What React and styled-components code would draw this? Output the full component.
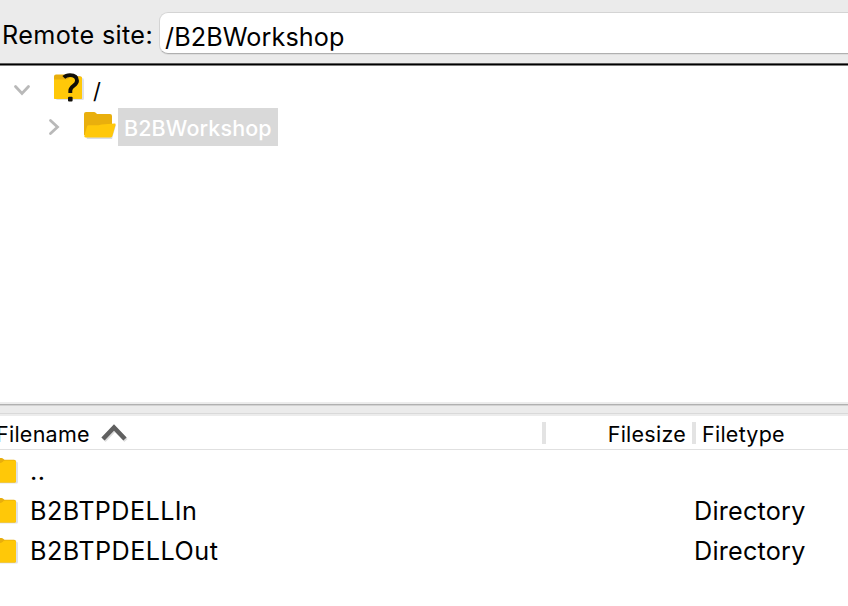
import React from "react";
import styled, { createGlobalStyle } from "styled-components";

const GlobalStyle = createGlobalStyle`
  * { box-sizing: border-box; }
  body { margin: 0; background: #fff; overflow: hidden; }
`;

const Window = styled.main`
  width: 848px;
  height: 606px;
  display: flex;
  flex-direction: column;
  overflow: hidden;
  background: #fff;
  color: #000;
  font-family: Inter, "Liberation Sans", sans-serif;
`;

const Text = styled.span`
  display: block;
  white-space: pre;
  font-size: ${(p) => p.$size || 25.2}px;
  line-height: 30px;
  letter-spacing: ${(p) => p.$track || 0}px;
`;

const SiteBar = styled.header`
  height: 63px;
  flex: none;
  display: flex;
  background: #ebebeb;
  padding: 12px 0 0 2px;
`;

const SiteLabel = styled.label`
  width: 157px;
  padding-top: 8px;
`;

const PathField = styled.div`
  flex: 1;
  height: 42px;
  padding: 9px 0 0 5px;
  background: #fff;
  border: 1px solid #d4d4d4;
  border-right: 0;
  border-bottom: 1px solid #b0b0b0;
  border-radius: 9px 0 0 9px;
  box-shadow: 0 1px 0 #dedede;
`;

const Divider = styled.div`
  height: 3px;
  flex: none;
  background: #000;
  border-top: 1px solid #5c5c5c;
  border-bottom: 1px solid #7c7c7c;
`;

const Tree = styled.section`
  height: 336px;
  flex: none;
  padding-top: 4px;
`;

const TreeRow = styled.div`
  height: 38px;
  display: flex;
  align-items: flex-start;
  padding-left: ${(p) => p.$indent}px;
`;

const RootName = styled.div`
  padding: 6px 0 0 7px;
`;

const SelectedName = styled.div`
  width: 160px;
  height: 38px;
  margin-left: 2px;
  padding: 5px 0 0 6px;
  background: #d9d9d9;
  color: #fff;
  font-weight: 500;
`;

const Icon = styled.svg`
  display: block;
  flex: none;
  overflow: visible;
`;

const Splitter = styled.div`
  height: 14px;
  flex: none;
  background: linear-gradient(
    #ececec 0 2px, #b0b0b0 2px 3px, #d2d2d2 3px 4px,
    #ebebeb 4px 11px, #d9d9d9 11px 12px, #ececec 12px
  );
`;

const ColumnHeader = styled.div`
  height: 34px;
  flex: none;
  display: grid;
  grid-template-columns: 542px 150px 1fr;
  border-bottom: 1px solid #e0e0e0;
`;

const HeadCell = styled.div`
  display: flex;
  position: relative;
  padding-top: 3px;
  justify-content: ${(p) => (p.$end ? "flex-end" : "flex-start")};
  padding-right: ${(p) => (p.$end ? 6 : 0)}px;
  padding-left: ${(p) => p.$left || 0}px;
`;

const Grip = styled.i`
  position: absolute;
  left: 0;
  top: 6px;
  width: 4px;
  height: 22px;
  background: #e3e3e3;
`;

const Filename = styled.div`
  width: 103px;
  margin-left: -4px;
`;

const FileRow = styled.div`
  height: 40px;
  display: grid;
  grid-template-columns: 30px 664px 1fr;
`;

const Cell = styled.div`
  padding-top: 6px;
`;

const Folder = () => (
  <>
    <path d="M1 2.500Q1 .5 3 .5h10l3 2H27q2 0 2 2V23q0 1.500-1.500 1.500H2.500Q1 24.500 1 23Z" fill="#b8bfca" opacity=".45" transform="translate(1 1)" />
    <path d="M0 2Q0 0 2 0h11.500q1 0 2 1l1 .7H26q2 0 2 2v19.300q0 1.500-1.500 1.500h-25Q0 24.500 0 23Z" fill="#e8ae0c" />
    <path d="M0 5h12q1.300 0 2.200-.8l1.400-1.200q.6-.5 1.600-.5H26.500q1.500 0 1.500 1.500V23q0 1.500-1.500 1.500h-25Q0 24.500 0 23Z" fill="#ffc808" />
  </>
);

const QuestionFolder = () => (
  <Icon width="32" height="32" viewBox="0 0 32 32">
    <g transform="translate(0 4.500)"><Folder /></g>
    <path d="M9.800 7.400Q12 5.100 16 5.100c4.400 0 7 2.100 7 5.600 0 4.900-6.700 5.300-6.700 10.100v2.200" fill="none" stroke="#100e08" strokeWidth="3.900" />
    <rect x="14" y="26.800" width="4.600" height="4.800" rx="1" fill="#100e08" />
  </Icon>
);

const OpenFolder = () => (
  <Icon width="32" height="27" viewBox="0 0 32 27">
    <path d="M2 24.500 5 13h27l-4 14H3Z" fill="#a9b4c8" opacity=".45" />
    <path d="M0 2Q0 0 2 0h8q1 0 2 1l1 1h13q2 0 2 2v19H0Z" fill="#e9af0d" />
    <path d="M3 14.500q.2-1.300 1.600-1.300h10l3-.8 13-.9q1.300 0 1 1.200L28.400 24q-.3 1.400-1.800 1.400H1.500Q0 25.400.3 24Z" fill="#ffc80a" />
  </Icon>
);

const Chevron = ({ d, w, h, color = "#b9b9b9", stroke = 2.8, shadow }) => (
  <Icon width={w} height={h} viewBox={`0 0 ${w} ${h}`} fill="none" strokeWidth={stroke}>
    {shadow && <path d={d} stroke="#dedede" transform="translate(1 1.500)" />}
    <path d={d} stroke={color} strokeLinecap={shadow ? "butt" : "round"} />
  </Icon>
);

const Slot = styled.div`
  width: ${(p) => p.$w}px;
  flex: none;
  padding-top: ${(p) => p.$top || 0}px;
  margin-left: ${(p) => p.$shift || 0}px;
`;

const FILES = [
  { name: "..", type: "", track: 0.5 },
  { name: "B2BTPDELLIn", type: "Directory", track: 0.42 },
  { name: "B2BTPDELLOut", type: "Directory", track: 0.47 },
];

export default function App() {
  return (
    <>
      <GlobalStyle />
      <Window>
        <SiteBar>
          <SiteLabel><Text $track={0.35}>Remote site:</Text></SiteLabel>
          <PathField><Text $track={0.08}>/B2BWorkshop</Text></PathField>
        </SiteBar>
        <Divider />
        <Tree>
          <TreeRow $indent={14}>
            <Slot $w={40} $top={15}><Chevron w={16} h={10} d="M1.500 1.500 8 8.500l6.500-7" /></Slot>
            <Slot $w={32} $top={0}><QuestionFolder /></Slot>
            <RootName><Text $size={22}>/</Text></RootName>
          </TreeRow>
          <TreeRow $indent={49}>
            <Slot $w={35} $top={11}><Chevron w={10} h={16} d="m1.500 1.500 7 6.500-7 6.500" /></Slot>
            <Slot $w={32} $top={4}><OpenFolder /></Slot>
            <SelectedName><Text $size={21.5} $track={0.12}>B2BWorkshop</Text></SelectedName>
          </TreeRow>
        </Tree>
        <Splitter />
        <ColumnHeader>
          <HeadCell>
            <Filename><Text $size={21.5} $track={0.25}>Filename</Text></Filename>
            <Slot $w={28} $top={4} $shift={2}>
              <Chevron w={26} h={18} d="m2 16 11-11.500L24 16" color="#606060" stroke={4.5} shadow />
            </Slot>
          </HeadCell>
          <HeadCell $end><Grip /><Text $size={21.5} $track={0.25}>Filesize</Text></HeadCell>
          <HeadCell $left={10}><Grip /><Text $size={21.5} $track={0.25}>Filetype</Text></HeadCell>
        </ColumnHeader>
        {FILES.map((f) => (
          <FileRow key={f.name}>
            <Slot $w={30} $top={8} $shift={-12}>
              <Icon width="30" height="26" viewBox="0 0 30 26"><Folder /></Icon>
            </Slot>
            <Cell><Text $track={f.track}>{f.name}</Text></Cell>
            <Cell><Text $track={0.22}>{f.type}</Text></Cell>
          </FileRow>
        ))}
      </Window>
    </>
  );
}
